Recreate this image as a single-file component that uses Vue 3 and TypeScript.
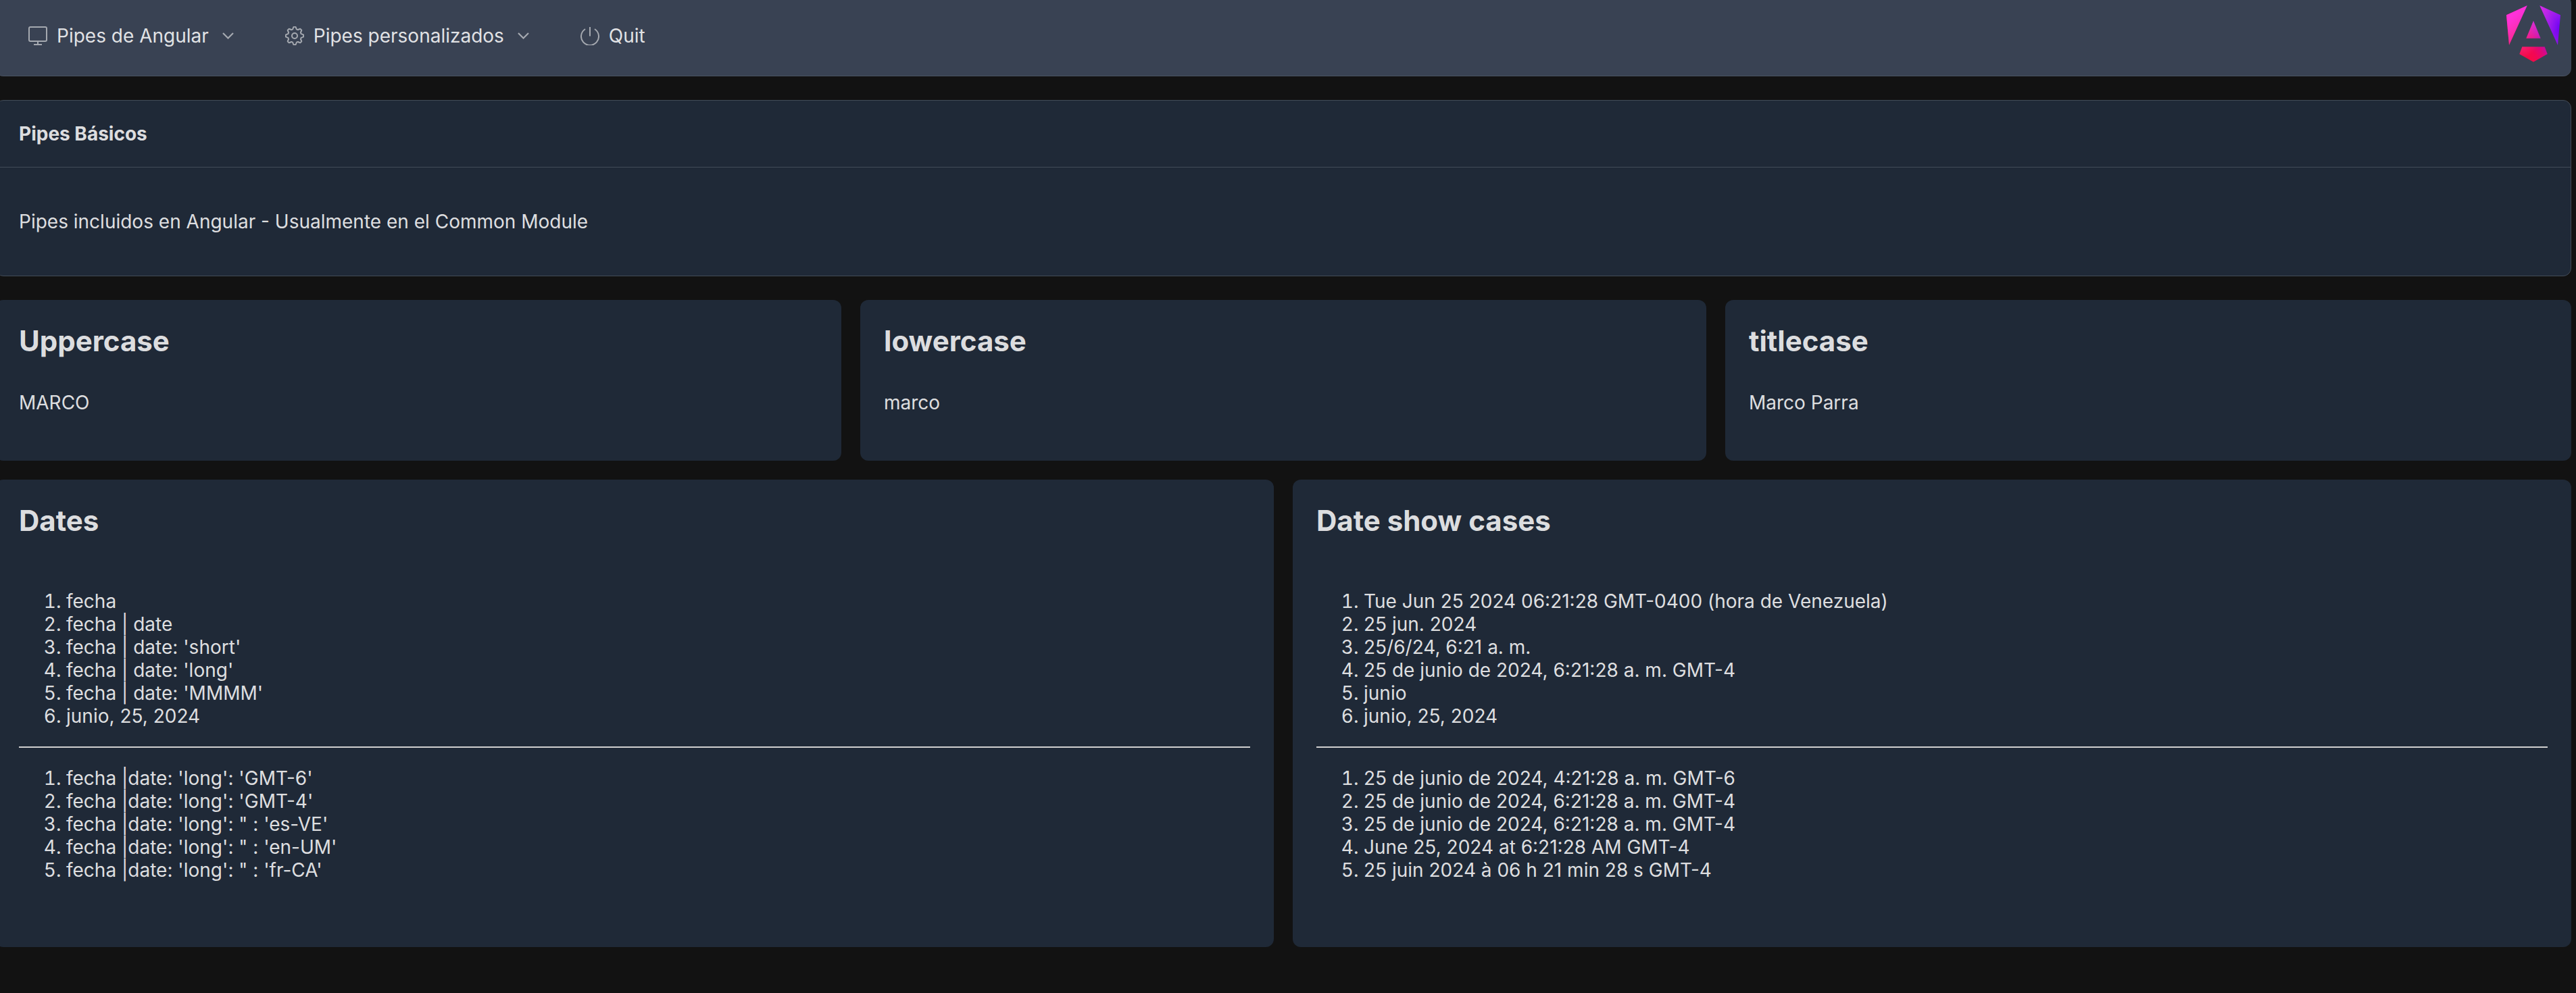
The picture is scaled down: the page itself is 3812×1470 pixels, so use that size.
<script setup lang="ts">
interface NavItem { label: string; icon: 'desktop' | 'cog' | 'power'; caret: boolean }
const nav: NavItem[] = [
  { label: 'Pipes de Angular', icon: 'desktop', caret: true },
  { label: 'Pipes personalizados', icon: 'cog', caret: true },
  { label: 'Quit', icon: 'power', caret: false },
]
const simple = [
  { title: 'Uppercase', value: 'MARCO' },
  { title: 'lowercase', value: 'marco' },
  { title: 'titlecase', value: 'Marco Parra' },
]
const dates = {
  a: ['fecha', 'fecha | date', "fecha | date: 'short'", "fecha | date: 'long'", "fecha | date: 'MMMM'", 'junio, 25, 2024'],
  b: ["fecha |date: 'long': 'GMT-6'", "fecha |date: 'long': 'GMT-4'", "fecha |date: 'long': \" : 'es-VE'", "fecha |date: 'long': \" : 'en-UM'", "fecha |date: 'long': \" : 'fr-CA'"],
}
const shows = {
  a: ['Tue Jun 25 2024 06:21:28 GMT-0400 (hora de Venezuela)', '25 jun. 2024', '25/6/24, 6:21 a. m.', '25 de junio de 2024, 6:21:28 a. m. GMT-4', 'junio', 'junio, 25, 2024'],
  b: ['25 de junio de 2024, 4:21:28 a. m. GMT-6', '25 de junio de 2024, 6:21:28 a. m. GMT-4', '25 de junio de 2024, 6:21:28 a. m. GMT-4', 'June 25, 2024 at 6:21:28 AM GMT-4', '25 juin 2024 à 06 h 21 min 28 s GMT-4'],
}
const columns = [
  { title: 'Dates', lists: dates },
  { title: 'Date show cases', lists: shows },
]
// Eight-lobed cog outline: radius swings between valley and tooth tip.
const cogPath = (() => {
  const pts: string[] = []
  for (let i = 0; i < 120; i++) {
    const t = (i / 120) * Math.PI * 2
    const r = 11.6 + 1.6 * Math.max(-1, Math.min(1, 1.5 * Math.cos(8 * t)))
    pts.push(`${(14 + r * Math.sin(t)).toFixed(2)} ${(14 - r * Math.cos(t)).toFixed(2)}`)
  }
  return `M${pts.join('L')}Z`
})()
</script>

<template>
  <div class="page">
    <header class="menubar">
      <nav class="menu">
        <a v-for="item in nav" :key="item.label" class="menu-item">
          <svg class="icon" viewBox="0 0 28 28" fill="none" stroke="#a5a9b0" stroke-width="2">
            <template v-if="item.icon === 'desktop'">
              <rect x="1" y="1" width="26" height="21" rx="2" />
              <path d="M14 22v5M8 27h12" />
            </template>
            <template v-else-if="item.icon === 'cog'">
              <path :d="cogPath" stroke-linejoin="round" />
              <circle cx="14" cy="14" r="4" />
            </template>
            <template v-else>
              <path d="M14 1v13.5" />
              <path d="M7 4a13 13 0 1 0 14 0" />
            </template>
          </svg>
          <span class="menu-label">{{ item.label }}</span>
          <svg v-if="item.caret" class="caret" viewBox="0 0 17 10" fill="none" stroke="#a5a9b0" stroke-width="2.2">
            <path d="M1 1l7.5 7.5L16 1" />
          </svg>
        </a>
      </nav>
      <svg class="logo" viewBox="291 25 240 250">
        <defs>
          <linearGradient id="ng-a" gradientUnits="userSpaceOnUse" x1="330" y1="265" x2="535" y2="130">
            <stop offset="0" stop-color="#e40035" />
            <stop offset=".24" stop-color="#f60a48" />
            <stop offset=".35" stop-color="#f20755" />
            <stop offset=".49" stop-color="#dc087d" />
            <stop offset=".74" stop-color="#9717e7" />
            <stop offset="1" stop-color="#6c00f5" />
          </linearGradient>
          <linearGradient id="ng-b" gradientUnits="userSpaceOnUse" x1="330" y1="60" x2="450" y2="195">
            <stop offset="0" stop-color="#ff31d9" />
            <stop offset="1" stop-color="#ff5be1" stop-opacity="0" />
          </linearGradient>
        </defs>
        <g fill="url(#ng-a)">
          <polygon points="291,67 383,25 303,200" />
          <polygon points="439,25 531,67 519,200" />
          <polygon points="411,93 443,170 379,170" />
          <polygon points="361,208 461,208 473,240 411,275 349,240" />
        </g>
        <g fill="url(#ng-b)">
          <polygon points="291,67 383,25 303,200" />
          <polygon points="439,25 531,67 519,200" />
          <polygon points="411,93 443,170 379,170" />
          <polygon points="361,208 461,208 473,240 411,275 349,240" />
        </g>
      </svg>
    </header>

    <section class="panel">
      <div class="panel-head">Pipes Básicos</div>
      <div class="panel-body">Pipes incluidos en Angular - Usualmente en el Common Module</div>
    </section>

    <div class="grid three">
      <article v-for="c in simple" :key="c.title" class="card">
        <h2 class="card-title">{{ c.title }}</h2>
        <div class="card-value">{{ c.value }}</div>
      </article>
    </div>

    <div class="grid two">
      <article v-for="c in columns" :key="c.title" class="card">
        <h2 class="card-title">{{ c.title }}</h2>
        <div class="card-lists">
          <ol>
            <li v-for="(t, i) in c.lists.a" :key="i">{{ t }}</li>
          </ol>
          <hr />
          <ol>
            <li v-for="(t, i) in c.lists.b" :key="i">{{ t }}</li>
          </ol>
        </div>
      </article>
    </div>
  </div>
</template>

<style>
html, body { margin: 0; background: #121212; overflow: hidden; }
</style>

<style scoped>
.page {
  width: 3812px;
  height: 1477px;
  margin: -7px 0 0 -7px;
  font-family: Inter, "Liberation Sans", sans-serif;
  font-size: 28px;
  color: rgba(255, 255, 255, 0.87);
  background: #121212;
}
.menubar {
  display: flex;
  align-items: center;
  justify-content: space-between;
  box-sizing: border-box;
  height: 120px;
  padding: 0 16px 0 49px;
  background: #394253;
  border-bottom: 1px solid #4a5361;
  border-radius: 12px;
}
.menu { display: flex; gap: 76px; }
.menu-item { display: flex; align-items: center; }
.icon { width: 28px; height: 28px; margin-right: 14px; }
.caret { width: 17px; height: 10px; margin-left: 20px; }
.logo { width: 80px; height: 84px; margin-top: -6px; }

.panel {
  margin-top: 35px;
  background: #1f2937;
  border: 1px solid #424b57;
  border-radius: 12px;
}
.panel-head {
  padding: 32px 34px;
  font-weight: 700;
  border-bottom: 1px solid #424b57;
}
.panel-body { padding: 63px 34px; }

.grid { display: grid; gap: 28px; }
.three { grid-template-columns: repeat(3, 1fr); margin-top: 35px; }
.two { grid-template-columns: repeat(2, 1fr); margin-top: 28px; }
.card {
  background: #1f2937;
  border-radius: 12px;
  padding: 35px;
}
.card-title {
  margin: 0 0 21px;
  font-size: 42px;
  line-height: 51px;
  font-weight: 700;
}
.card-value { padding: 28px 0 34px; }
.card-lists { padding: 28px 0 34px; }
ol { margin: 28px 0; padding-left: 70px; }
hr {
  margin: 28px 0 0;
  height: 2px;
  border: 0;
  background: #d0d0d0;
}
hr + ol { margin-top: 28px; }
</style>
